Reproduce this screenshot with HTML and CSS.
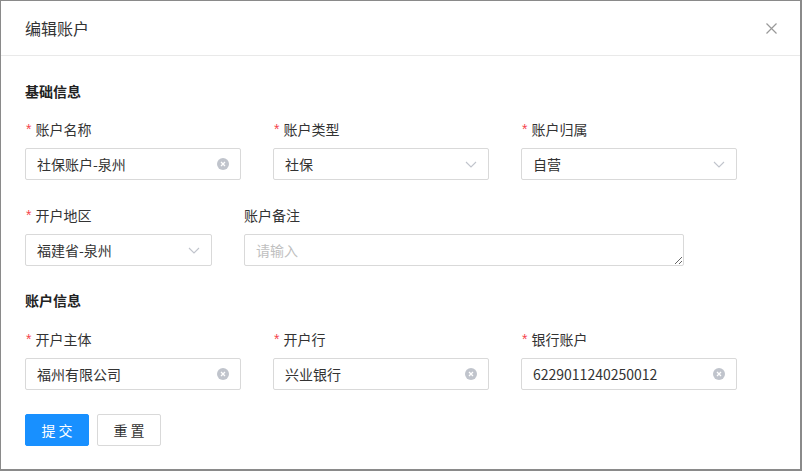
FILE: index.html
```html
<!DOCTYPE html>
<html lang="zh-CN">
<head>
<meta charset="utf-8">
<title>编辑账户</title>
<link rel="stylesheet" href="styles.css">
</head>
<body>
<div class="modal">
  <div class="modal-header">
    <div class="modal-title">编辑账户</div>
    <svg class="close" width="11" height="11" viewBox="0 0 11 11"><path d="M0.5 0.5L10.5 10.5M10.5 0.5L0.5 10.5" stroke="#999" stroke-width="1.2" fill="none"/></svg>
  </div>
  <div class="modal-body">
    <div class="section-title">基础信息</div>
    <div class="row">
      <div class="item">
        <div class="label"><span class="req">*</span>账户名称</div>
        <div class="field"><span class="val">社保账户-泉州</span><span class="clear"><svg width="12" height="12" viewBox="0 0 12 12"><circle cx="6" cy="6" r="6" fill="#c0c4cc"/><path d="M4 4L8 8M8 4L4 8" stroke="#fff" stroke-width="1.3"/></svg></span></div>
      </div>
      <div class="item">
        <div class="label"><span class="req">*</span>账户类型</div>
        <div class="field"><span class="val">社保</span><span class="arrow"><svg width="12" height="7" viewBox="0 0 12 7"><path d="M1 1L6 6L11 1" stroke="#c0c4cc" stroke-width="1.1" fill="none"/></svg></span></div>
      </div>
      <div class="item">
        <div class="label"><span class="req">*</span>账户归属</div>
        <div class="field"><span class="val">自营</span><span class="arrow"><svg width="12" height="7" viewBox="0 0 12 7"><path d="M1 1L6 6L11 1" stroke="#c0c4cc" stroke-width="1.1" fill="none"/></svg></span></div>
      </div>
    </div>
    <div class="row row-2">
      <div class="item item-region">
        <div class="label"><span class="req">*</span>开户地区</div>
        <div class="field"><span class="val">福建省-泉州</span><span class="arrow"><svg width="12" height="7" viewBox="0 0 12 7"><path d="M1 1L6 6L11 1" stroke="#c0c4cc" stroke-width="1.1" fill="none"/></svg></span></div>
      </div>
      <div class="item item-note">
        <div class="label">账户备注</div>
        <textarea class="textarea" placeholder="请输入"></textarea>
      </div>
    </div>
    <div class="section-title section-2">账户信息</div>
    <div class="row row-3">
      <div class="item">
        <div class="label"><span class="req">*</span>开户主体</div>
        <div class="field"><span class="val">福州有限公司</span><span class="clear"><svg width="12" height="12" viewBox="0 0 12 12"><circle cx="6" cy="6" r="6" fill="#c0c4cc"/><path d="M4 4L8 8M8 4L4 8" stroke="#fff" stroke-width="1.3"/></svg></span></div>
      </div>
      <div class="item">
        <div class="label"><span class="req">*</span>开户行</div>
        <div class="field"><span class="val">兴业银行</span><span class="clear"><svg width="12" height="12" viewBox="0 0 12 12"><circle cx="6" cy="6" r="6" fill="#c0c4cc"/><path d="M4 4L8 8M8 4L4 8" stroke="#fff" stroke-width="1.3"/></svg></span></div>
      </div>
      <div class="item">
        <div class="label"><span class="req">*</span>银行账户</div>
        <div class="field"><span class="val">6229011240250012</span><span class="clear"><svg width="12" height="12" viewBox="0 0 12 12"><circle cx="6" cy="6" r="6" fill="#c0c4cc"/><path d="M4 4L8 8M8 4L4 8" stroke="#fff" stroke-width="1.3"/></svg></span></div>
      </div>
    </div>
    <div class="actions">
      <button class="btn btn-primary">提 交</button>
      <button class="btn btn-default">重 置</button>
    </div>
  </div>
</div>
</body>
</html>
```

FILE: styles.css
```css
* { box-sizing: border-box; }
html, body { margin: 0; padding: 0; background: #fff; }
body {
  font-family: "Noto Sans CJK SC", "Noto Sans", "Liberation Sans", sans-serif;
  font-size: 14px;
  color: #333;
}
.modal {
  width: 802px;
  height: 471px;
  border-top: 1px solid #8a8a8a;
  border-left: 1px solid #8a8a8a;
  border-right: 2px solid #8a8a8a;
  border-bottom: 2px solid #8a8a8a;
  background: #fff;
  overflow: hidden;
}
.modal-header {
  height: 55px;
  border-bottom: 1px solid #e9e9e9;
  display: flex;
  align-items: center;
  justify-content: space-between;
  padding: 0 23px 0 24px;
}
.modal-title {
  font-size: 16px;
  line-height: 22px;
  color: #333;
  margin-top: -1px;
}
.close { display: block; }
.modal-body {
  padding: 25px 24px 0 24px;
}
.section-title {
  font-weight: bold;
  font-size: 14px;
  line-height: 20px;
  height: 20px;
  color: #222;
  margin-bottom: 18px;
}
.section-2 { margin-top: 24px; margin-bottom: 19px; }
.row {
  display: flex;
  gap: 32px;
}
.row-2 { margin-top: 25px; }
.item { width: 216px; }
.item-region { width: 187px; }
.item-note { width: 440px; }
.label {
  display: flex;
  align-items: center;
  height: 20px;
  line-height: 20px;
  font-size: 14px;
  color: #333;
  margin-bottom: 9px;
  white-space: nowrap;
}
.req {
  color: #f5454d;
  margin-left: 1px;
  margin-right: 4px;
  font-family: "Liberation Sans", sans-serif;
  line-height: 20px;
}
.field {
  height: 32px;
  border: 1px solid #d9d9d9;
  border-radius: 2px;
  display: flex;
  align-items: center;
  justify-content: space-between;
  padding: 0 11px 0 11px;
  background: #fff;
}
.val {
  color: #333;
  font-size: 14px;
  line-height: 20px;
  white-space: nowrap;
}
.clear, .arrow { display: flex; align-items: center; }
.clear svg, .arrow svg { display: block; }
.textarea {
  display: block;
  width: 440px;
  height: 32px;
  border: 1px solid #d9d9d9;
  border-radius: 2px;
  padding: 5px 11px;
  font-family: "Noto Sans CJK SC", "Noto Sans", sans-serif;
  font-size: 14px;
  line-height: 20px;
  color: #333;
  resize: vertical;
  outline: none;
  margin: 0;
}
.textarea::placeholder { color: #bfbfbf; }
.actions {
  margin-top: 24px;
  display: flex;
  gap: 8px;
}
.btn {
  width: 64px;
  height: 32px;
  border-radius: 2px;
  font-family: "Noto Sans CJK SC", "Noto Sans", sans-serif;
  font-size: 14px;
  padding: 0;
  cursor: pointer;
}
.btn-primary {
  background: #1890ff;
  border: 1px solid #1890ff;
  color: #fff;
}
.btn-default {
  background: #fff;
  border: 1px solid #d9d9d9;
  color: #333;
}
```
